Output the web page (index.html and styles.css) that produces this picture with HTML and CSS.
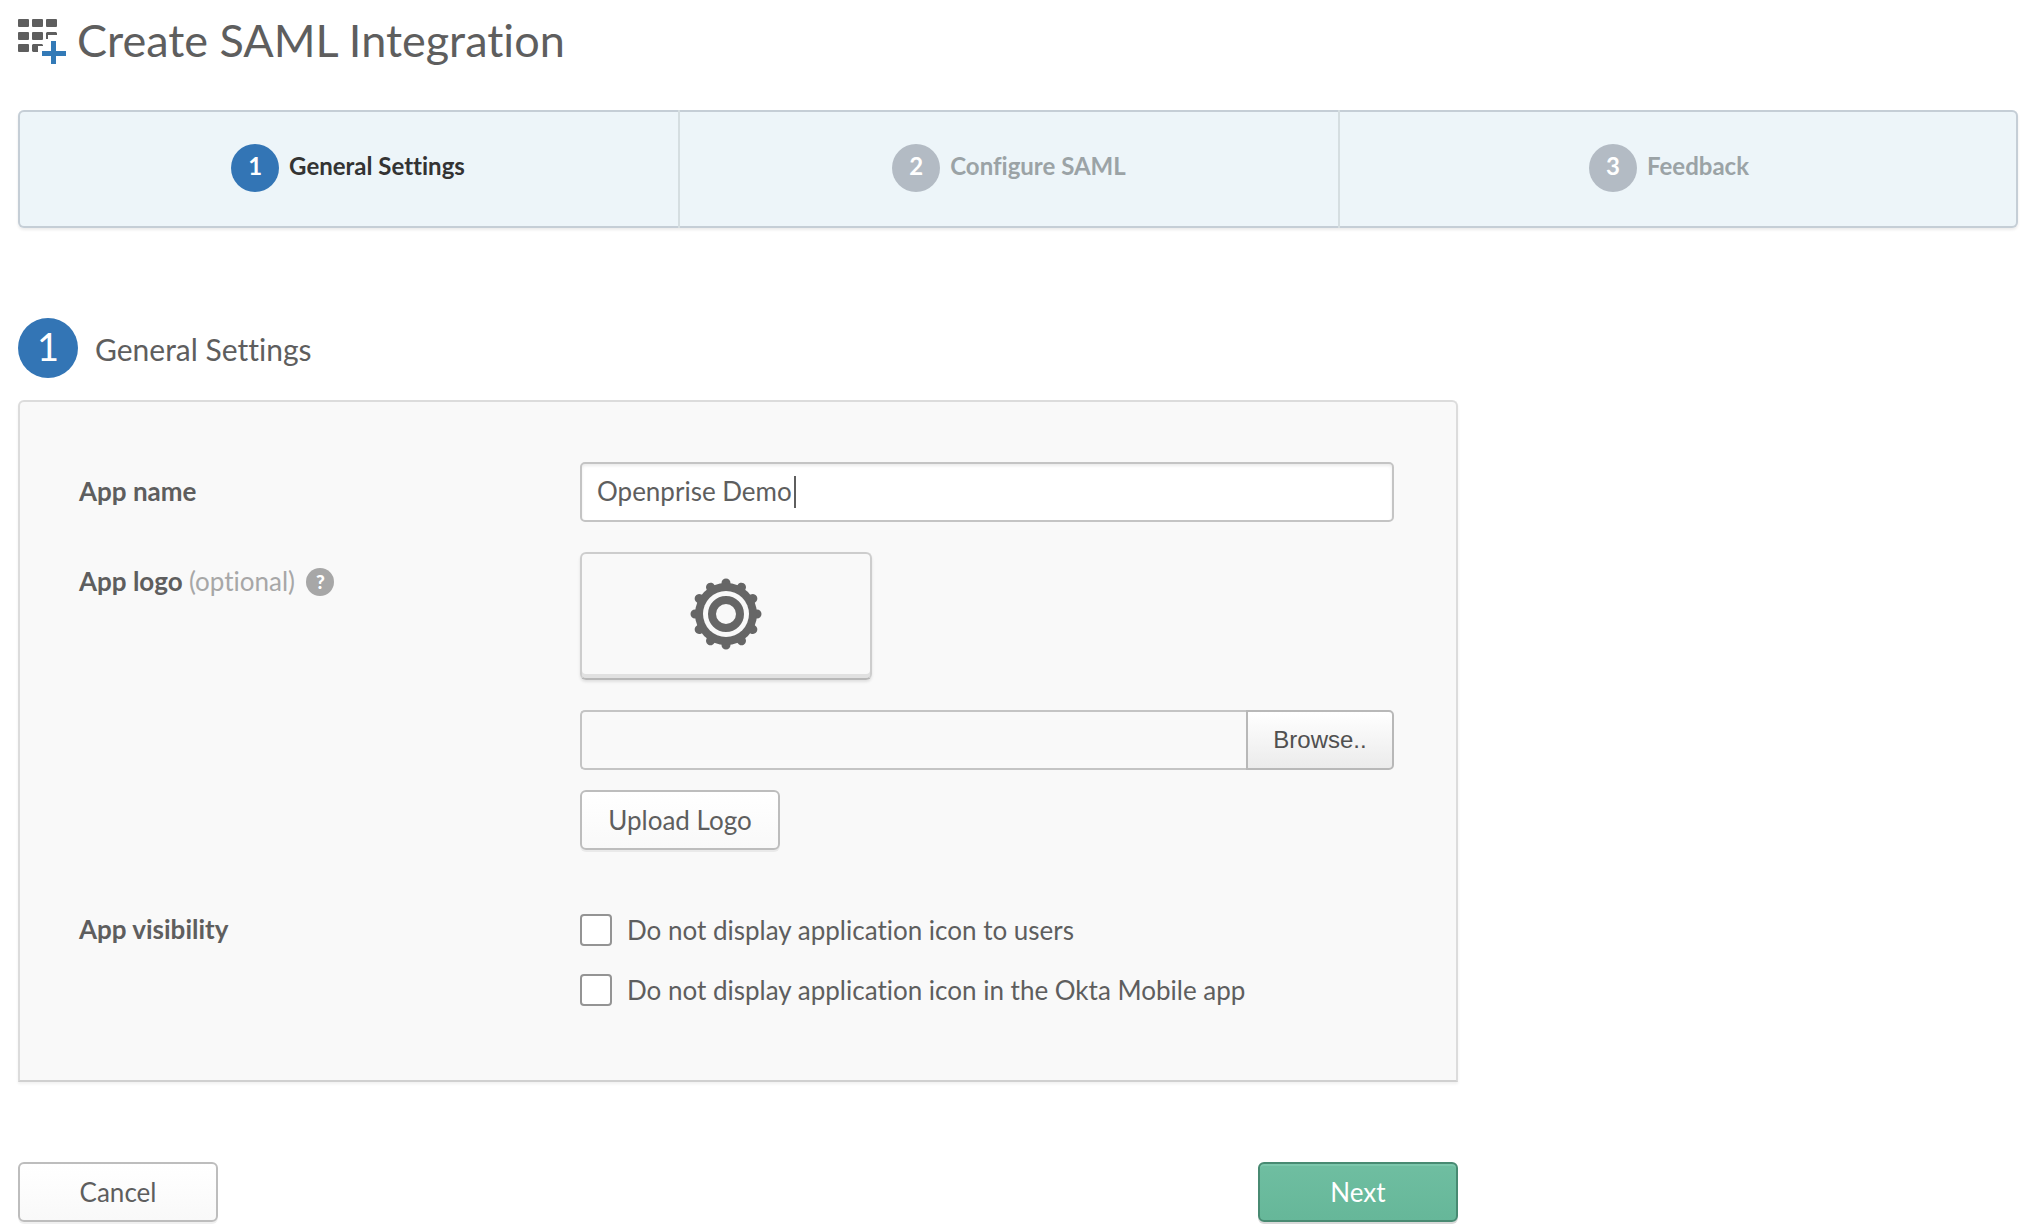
FILE: index.html
```html
<!DOCTYPE html>
<html lang="en">
<head>
  <meta charset="UTF-8" />
  <meta name="viewport" content="width=device-width, initial-scale=1" />
  <title>Create SAML Integration</title>
  <link rel="stylesheet" href="styles.css">
</head>
<body>

  <header class="page-header">
    <svg class="page-icon" viewBox="0 0 48 46" aria-hidden="true">
      <g fill="#5e5e5e">
        <rect x="0" y="1" width="11" height="8" rx="1" />
        <rect x="14" y="1" width="11" height="8" rx="1" />
        <rect x="28" y="1" width="11" height="8" rx="1" />
        <rect x="0" y="14" width="11" height="8" rx="1" />
        <rect x="14" y="14" width="11" height="8" rx="1" />
        <path d="M29 14h9l1 1v2h-9v4h-2v-6z" />
        <rect x="0" y="26" width="11" height="8" rx="1" />
        <path d="M15 26h9l1 1v1h-5v6h-5l-1-1v-6z" />
      </g>
      <path d="M33 23h5v10h10v5h-10v8h-5v-8h-9v-5h9z" fill="#337ab7" />
    </svg>
    <h1>Create SAML Integration</h1>
  </header>

  <ol class="steps">
    <li class="step active"><span class="step-number">1</span> <span class="step-name">General Settings</span></li>
    <li class="step"><span class="step-number">2</span> <span class="step-name">Configure SAML</span></li>
    <li class="step"><span class="step-number">3</span> <span class="step-name">Feedback</span></li>
  </ol>

  <form class="wizard" id="generalSettings">
    <div class="section-title">
      <span class="section-number">1</span>
      <h2>General Settings</h2>
    </div>

    <div class="panel">
      <div class="row">
        <label class="row-label" for="appName">App name</label>
        <div class="row-field name-field">
          <input type="text" id="appName" name="appName" class="text-input" value="Openprise Demo" />
          <span class="caret"></span>
        </div>
      </div>

      <div class="row">
        <div class="row-label">
          <label for="logoFile">App logo <span class="optional">(optional)</span></label>
          <button type="button" class="help" aria-label="Help">?</button>
        </div>
        <div class="row-field">
          <div class="logo-box">
            <svg class="gear" viewBox="-36 -36 72 72" aria-hidden="true">
              <g stroke="#666" stroke-width="9" stroke-linecap="round">
                <path d="M0-31V31M-31 0H31" />
                <path d="M0-31V31M-31 0H31" transform="rotate(30)" />
                <path d="M0-31V31M-31 0H31" transform="rotate(60)" />
              </g>
              <circle r="31" fill="#666" />
              <circle r="23" fill="#f9f9f9" />
              <circle r="14" fill="#f9f9f9" stroke="#666" stroke-width="8" />
            </svg>
          </div>
          <div class="file-picker">
            <input type="text" id="logoFile" name="logoFile" class="file-name" readonly />
            <button type="button" class="browse">Browse..</button>
          </div>
          <button type="button" class="btn">Upload Logo</button>
        </div>
      </div>

      <div class="row visibility">
        <span class="row-label">App visibility</span>
        <div class="row-field">
          <label class="check"><input type="checkbox" name="hideIcon" /> Do not display application icon to users</label>
          <label class="check"><input type="checkbox" name="hideMobile" /> Do not display application icon in the Okta Mobile app</label>
        </div>
      </div>
    </div>

    <div class="actions">
      <button type="button" class="btn">Cancel</button>
      <button type="submit" class="btn btn-next">Next</button>
    </div>
  </form>

</body>
</html>
```
FILE: styles.css
```css
* {
  box-sizing: border-box;
}

body {
  margin: 0;
  padding: 18px 18px 10px;
  background: #fff;
  font-family: Lato, "Open Sans", sans-serif;
  font-size: 26px;
  font-variant-ligatures: none;
  line-height: 32px;
  color: #5e5e5e;
}

h1,
h2 {
  margin: 0;
  font-weight: 400;
}

button,
input {
  font: inherit;
  color: inherit;
}

.page-header {
  display: flex;
  align-items: center;
  gap: 11px;
  height: 46px;
}

.page-icon {
  width: 48px;
  height: 46px;
}

h1 {
  font-size: 45px;
  line-height: 44px;
  padding-bottom: 2px;
}

.steps {
  display: flex;
  list-style: none;
  margin: 46px 0 0;
  padding: 0;
  height: 118px;
  background: #edf5f9;
  border-radius: 6px;
  box-shadow: inset 0 0 0 2px #c5ced6, 0 2px 3px rgba(0, 0, 0, 0.08);
}

.step {
  display: flex;
  justify-content: center;
  align-items: center;
  gap: 10px;
  width: 33%;
  padding-bottom: 2px;
  font-size: 24px;
  font-weight: bold;
  color: #9ba3a6;
}

.step + .step {
  border-left: 2px solid #d5dee1;
}

.step.active {
  color: #333;
}

.step-number {
  width: 48px;
  height: 48px;
  border-radius: 50%;
  background: #b3bbc4;
  color: #fff;
  line-height: 44px;
  text-align: center;
}

.step-name {
  line-height: 44px;
  padding-bottom: 4px;
}

.active .step-number {
  background: #3375b5;
}

.wizard {
  max-width: 1440px;
  margin-top: 90px;
}

.section-title {
  display: flex;
  align-items: center;
  gap: 17px;
}

.section-number {
  width: 60px;
  height: 60px;
  border-radius: 50%;
  background: #3375b5;
  color: #fff;
  font-size: 38px;
  line-height: 56px;
  text-align: center;
}

h2 {
  font-size: 30px;
  padding-top: 2px;
}

.panel {
  margin-top: 22px;
  padding: 60px 62px 60px 59px;
  background: #f9f9f9;
  border: 2px solid #dcdcdc;
  border-bottom-color: #d0d0d0;
  border-radius: 6px 6px 0 0;
  box-shadow: 0 2px 3px rgba(0, 0, 0, 0.06);
}

.row {
  display: flex;
  margin-bottom: 30px;
}

.row-label {
  flex: 0 0 501px;
  line-height: 58px;
  font-weight: bold;
}

.row-field {
  flex: 1;
}

.optional {
  font-weight: 400;
  color: #a7a7a7;
}

.help {
  width: 28px;
  height: 28px;
  margin-left: 5px;
  padding: 0;
  border: none;
  border-radius: 50%;
  background: #a7a7a7;
  color: #fff;
  font-size: 19px;
  font-weight: 900;
  line-height: 28px;
  vertical-align: 2px;
}

.text-input {
  display: block;
  width: 100%;
  height: 60px;
  padding: 0 15px 2px;
  background: #fff;
  border: 2px solid #c4c4c4;
  border-radius: 5px;
  box-shadow: inset 0 2px 3px rgba(0, 0, 0, 0.08);
  outline: none;
}

.name-field {
  position: relative;
}

.caret {
  position: absolute;
  top: 14px;
  left: 214px;
  width: 2px;
  height: 32px;
  background: #5e5e5e;
}

.logo-box {
  display: flex;
  justify-content: center;
  align-items: center;
  width: 292px;
  height: 128px;
  padding-bottom: 4px;
  border: 2px solid #cdcdcd;
  border-bottom-color: #b8b8b8;
  border-radius: 6px;
  box-shadow: inset 0 -4px 0 #e1e1e1, 0 2px 3px rgba(0, 0, 0, 0.1);
}

.gear {
  width: 72px;
  height: 72px;
}

.file-picker {
  display: flex;
  height: 60px;
  margin: 30px 0 20px;
}

.file-name {
  flex: 1;
  min-width: 0;
  padding: 0 15px;
  background: #f9f9f9;
  border: 2px solid #c4c4c4;
  border-right: none;
  border-radius: 5px 0 0 5px;
  outline: none;
}

.browse {
  width: 148px;
  background: linear-gradient(#fff, #ebebeb);
  border: 2px solid #b8b8b8;
  border-radius: 0 5px 5px 0;
  color: #505050;
  font-family: "Liberation Sans", Arial, sans-serif;
  font-size: 24px;
}

.btn {
  display: block;
  width: 200px;
  height: 60px;
  padding: 0;
  background: linear-gradient(#fff, #f9f9f9);
  border: 2px solid #bdbdbd;
  border-radius: 6px;
  box-shadow: 0 2px 0 rgba(0, 0, 0, 0.06);
}

.visibility {
  margin: 50px 0 0;
}

.check {
  display: flex;
  align-items: center;
  gap: 15px;
  height: 60px;
}

.check input {
  appearance: none;
  width: 32px;
  height: 32px;
  margin: 0;
  background: #fff;
  border: 2px solid #949494;
  border-radius: 4px;
}

.check input:checked {
  background: #3375b5;
}

.actions {
  display: flex;
  justify-content: space-between;
  margin-top: 80px;
}

.btn-next {
  background: linear-gradient(#6fbea1, #66b799);
  border-color: #488a72;
  box-shadow: inset 0 2px 0 #7cc7ac, 0 2px 0 rgba(0, 0, 0, 0.15);
  color: #fff;
}
```
